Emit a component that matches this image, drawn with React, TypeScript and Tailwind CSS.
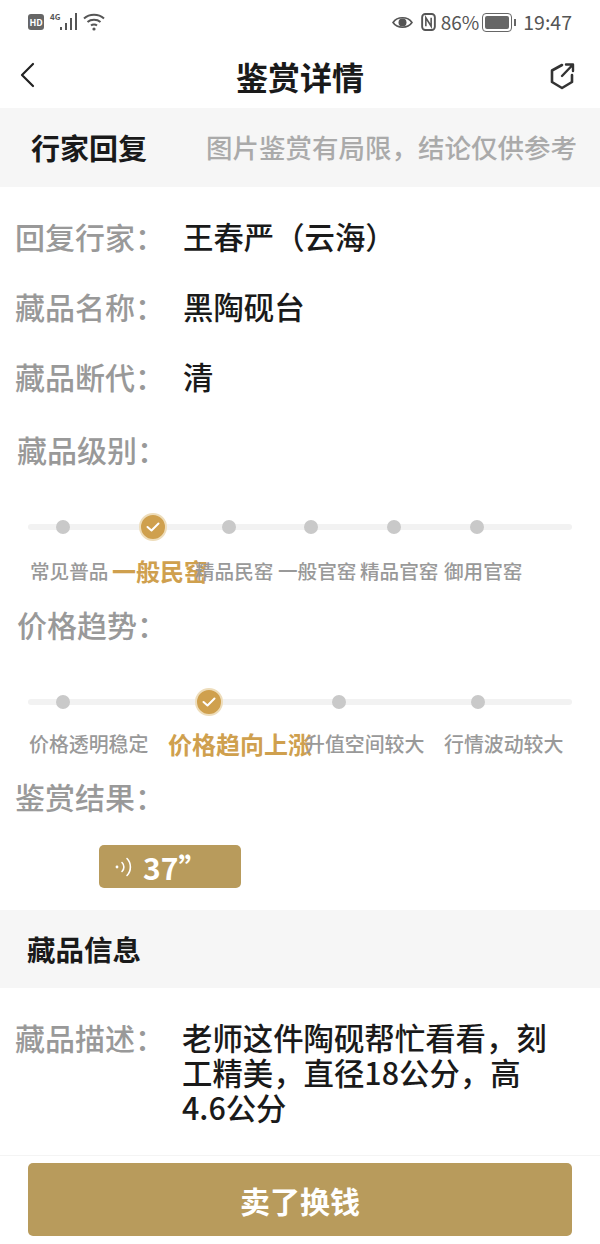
const font = { fontFamily: '"Noto Sans CJK SC", "Noto Sans", sans-serif' }

function StatusBar() {
  return (
    <div className="flex h-[44px] items-center justify-between pl-[28px] pr-[28px] text-[#555]">
      <div className="flex items-center">
        <span className="flex h-[16px] w-[16px] items-center justify-center rounded-[3px] bg-[#666] text-[9px] font-bold leading-none text-white">
          HD
        </span>
        <span className="ml-[6px] mb-[10px] text-[8px] font-bold leading-none">4G</span>
        <svg width="20" height="20" viewBox="0 0 20 20" fill="#555">
          <rect x="0" y="15" width="2" height="3" />
          <rect x="5" y="11" width="2" height="7" />
          <rect x="10" y="6" width="2" height="12" />
          <rect x="15" y="1" width="2" height="17" />
        </svg>
        <svg width="22" height="20" viewBox="0 0 22 20" className="ml-[3px]" fill="none" stroke="#555" strokeWidth="2">
          <path d="M1 6.5 C6.5 1.5 15.5 1.5 21 6.5" />
          <path d="M4.5 10 C8 7 14 7 17.5 10" />
          <path d="M8 13.5 C9.5 12.3 12.5 12.3 14 13.5" />
          <circle cx="11" cy="17" r="1.6" fill="#555" stroke="none" />
        </svg>
      </div>
      <div className="flex items-center">
        <svg width="21" height="15" viewBox="0 0 20 14" fill="none" stroke="#555" strokeWidth="1.6">
          <path d="M1 7 C5 1 15 1 19 7 C15 13 5 13 1 7 Z" />
          <circle cx="10" cy="7" r="3.8" fill="#555" stroke="none" />
        </svg>
        <svg width="15" height="18" viewBox="0 0 14 17" className="ml-[8px]" fill="none" stroke="#555" strokeWidth="1.8">
          <rect x="1" y="1" width="12" height="15" rx="3" />
          <path d="M4.5 12.5 V4.5 L9.5 12.5 V4.5" strokeWidth="1.5" />
        </svg>
        <span className="ml-[5px] mb-[2px] text-[19px] leading-none text-[#555]">86%</span>
        <span className="ml-[3px] flex h-[19px] w-[30px] items-center rounded-[4px] border border-[#666] p-[2px]">
          <span className="h-full w-full rounded-[2px] bg-[#666]" />
        </span>
        <span className="ml-[2px] h-[7px] w-[2px] bg-[#666]" />
        <span className="ml-[7px] text-[19.5px] leading-none text-[#555]">19:47</span>
      </div>
    </div>
  )
}

function InfoRow({ label, value }: { label: string; value: string }) {
  return (
    <div className="flex h-[70px] items-center pl-[15px] text-[30px] leading-none">
      <span className="w-[168px] font-medium text-[#999]">{label}</span>
      <span className="text-[30.4px] font-medium text-[#1a1a1a]">{value}</span>
    </div>
  )
}

function Dot({ className }: { className: string }) {
  return <span className={`block h-[14px] w-[14px] shrink-0 rounded-full bg-[#c9c9c9] ${className}`} />
}

function CheckDot({ className }: { className: string }) {
  return (
    <span className={`flex h-[28px] w-[28px] shrink-0 items-center justify-center rounded-full border-2 border-[#eeddbb] bg-[#cfa04e] ${className}`}>
      <svg width="14" height="12" viewBox="0 0 14 12" fill="none" stroke="#fff" strokeWidth="2" strokeLinecap="round" strokeLinejoin="round">
        <path d="M1.5 6 L5.5 9.5 L12.5 2.5" />
      </svg>
    </span>
  )
}

function Track({ children }: { children: React.ReactNode }) {
  return (
    <div className="relative mx-[28px] flex h-[28px] items-center">
      <div className="absolute inset-x-0 top-[11px] h-[6px] rounded-full bg-[#f2f2f2]" />
      <div className="relative flex items-center">{children}</div>
    </div>
  )
}

export default function App() {
  return (
    <div className="flex h-[1244px] w-[600px] flex-col overflow-hidden bg-white" style={font}>
      <StatusBar />

      <div className="relative flex h-[64px] items-center justify-between pl-[20px] pr-[25px]">
        <svg width="15" height="26" viewBox="0 0 15 26" fill="none" stroke="#222" strokeWidth="2.2" strokeLinecap="round" strokeLinejoin="round" className="mb-[2px]">
          <path d="M13 2 L2 13 L13 24" />
        </svg>
        <h1 className="absolute inset-x-0 text-center text-[32px] font-bold leading-none text-[#1a1a1a]">鉴赏详情</h1>
        <svg width="26" height="28" viewBox="0 0 26 28" fill="none" stroke="#333" strokeWidth="2.6" strokeLinejoin="round" strokeLinecap="round">
          <path d="M13 3 L3 8.5 V20 L13 26 L23 20 V13" />
          <path d="M13 14 L24 2.5 M17 2.5 H24 V9" strokeWidth="2.4" />
        </svg>
      </div>

      <div className="flex h-[79px] items-center justify-between bg-[#f6f6f6] pl-[31px] pr-[23px]">
        <span className="text-[29px] font-bold leading-none text-[#1a1a1a]">行家回复</span>
        <span className="text-[26.5px] font-medium leading-none text-[#aaa]">图片鉴赏有局限，结论仅供参考</span>
      </div>

      <div className="h-[14px]" />
      <InfoRow label="回复行家：" value="王春严（云海）" />
      <InfoRow label="藏品名称：" value="黑陶砚台" />
      <InfoRow label="藏品断代：" value="清" />

      <div className="flex h-[76px] items-center pl-[17px] text-[30px] font-medium leading-none text-[#999]">藏品级别：</div>
      <div className="h-[26px]" />
      <Track>
        <Dot className="ml-[28px]" />
        <CheckDot className="ml-[69px]" />
        <Dot className="ml-[55px]" />
        <Dot className="ml-[68px]" />
        <Dot className="ml-[69px]" />
        <Dot className="ml-[69px]" />
      </Track>
      <div className="mt-[14px] flex h-[32px] items-center pl-[30px] text-[19.6px] font-medium leading-none whitespace-nowrap text-[#999]">
        <span className="w-[82px] shrink-0">常见普品</span>
        <span className="w-[83px] shrink-0 text-[24px] font-bold text-[#cfa04e]">一般民窑</span>
        <span className="w-[83px] shrink-0">精品民窑</span>
        <span className="w-[82px] shrink-0">一般官窑</span>
        <span className="w-[84px] shrink-0">精品官窑</span>
        <span className="shrink-0">御用官窑</span>
      </div>

      <div className="flex h-[74px] items-center pl-[17px] text-[30px] font-medium leading-none text-[#999]">价格趋势：</div>
      <div className="h-[27px]" />
      <Track>
        <Dot className="ml-[28px]" />
        <CheckDot className="ml-[125px]" />
        <Dot className="ml-[109px]" />
        <Dot className="ml-[125px]" />
      </Track>
      <div className="mt-[12px] flex h-[32px] items-center pl-[29px] text-[19.9px] font-medium leading-none whitespace-nowrap text-[#999]">
        <span className="w-[139px] shrink-0">价格透明稳定</span>
        <span className="w-[137px] shrink-0 text-[24px] font-bold text-[#cfa04e]">价格趋向上涨</span>
        <span className="w-[139px] shrink-0">升值空间较大</span>
        <span className="shrink-0">行情波动较大</span>
      </div>

      <div className="mt-[1px] flex h-[70px] items-center pl-[15px] text-[30px] font-medium leading-none text-[#999]">鉴赏结果：</div>
      <div className="ml-[99px] mt-[14px] flex h-[43px] w-[142px] items-center rounded-[5px] bg-[#b89b5c] pl-[15px] text-white">
        <svg width="20" height="24" viewBox="0 0 20 24" fill="none" stroke="#fff" strokeWidth="1.6" strokeLinecap="round">
          <circle cx="3" cy="12" r="1.4" fill="#fff" stroke="none" />
          <path d="M8 7.5 C10.5 10 10.5 14 8 16.5" />
          <path d="M13 3.5 C17.5 8 17.5 16 13 20.5" />
        </svg>
        <span className="ml-[9px] text-[30px] font-bold leading-none">37”</span>
      </div>

      <div className="mt-[22px] flex h-[78px] items-center bg-[#f6f6f6] pl-[27px] text-[28.5px] font-bold leading-none text-[#1a1a1a]">
        藏品信息
      </div>

      <div className="flex pl-[15px] pr-[48px] pt-[32px] text-[30px] font-medium leading-[35px]">
        <span className="w-[167px] shrink-0 text-[#999]">藏品描述：</span>
        <p className="text-[30.4px] text-[#1a1a1a]">老师这件陶砚帮忙看看，刻工精美，直径18公分，高4.6公分</p>
      </div>

      <div className="mt-[30px] border-t border-[#f4f4f4] px-[28px] pt-[7px]">
        <button className="flex h-[73px] w-full items-center justify-center rounded-[5px] bg-[#b89b5c] text-[30px] font-bold leading-none text-white">
          卖了换钱
        </button>
      </div>
    </div>
  )
}
